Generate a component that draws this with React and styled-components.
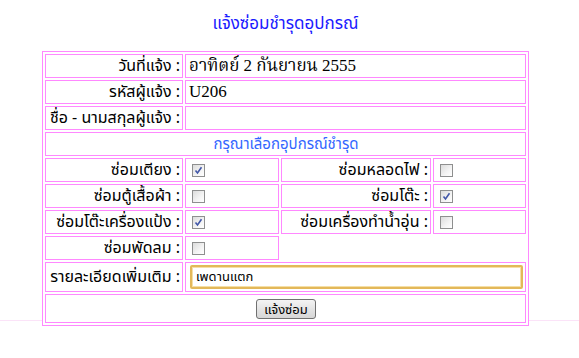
import { Fragment } from "react";
import styled, { createGlobalStyle } from "styled-components";

const pink = "#ff88ff";

const GlobalStyle = createGlobalStyle`
  body {
    margin: 0;
    background-color: #ffffff;
    background-image: linear-gradient(#fbe3f8, #fbe3f8);
    background-repeat: no-repeat;
    background-size: 100% 1px;
    background-position: 0 320px;
    font-family: Tahoma, "Noto Sans Thai", "Noto Serif Thai", Loma, Garuda, "DejaVu Sans", sans-serif;
  }
`;

const Page = styled.div`
  width: 579px;
  height: 358px;
  padding-left: 42px;
  box-sizing: border-box;
`;

const Title = styled.div`
  width: 487px;
  height: 51px;
  display: flex;
  align-items: center;
  justify-content: center;
  color: #1a1aff;
  font-size: 17px;
  padding-bottom: 3px;
  box-sizing: border-box;
`;

const Table = styled.div`
  display: grid;
  grid-template-columns: 138px 94px 150px 93px;
  grid-template-rows: repeat(8, 24px) 30px 29px;
  gap: 2px;
  padding: 2px;
  border: 1px solid ${pink};
  width: fit-content;
  background: #fff;
`;

const Cell = styled.div`
  border: ${(p) => (p.$empty ? "none" : `1px solid ${pink}`)};
  display: flex;
  align-items: center;
  justify-content: ${(p) =>
    p.$align === "right" ? "flex-end" : p.$align === "center" ? "center" : "flex-start"};
  grid-column: span ${(p) => p.$span || 1};
  padding: 0 2px 0 3px;
  font-size: 16px;
  color: #000;
  white-space: nowrap;
  overflow: hidden;
`;

const Value = styled.span`
  font-family: "Liberation Serif", Tahoma, "Noto Serif Thai", "Noto Sans Thai", serif;
  font-size: 17px;
`;

const Section = styled.span`
  color: #3366ff;
  font-size: 15px;
`;

const Box = styled.span`
  width: 13px;
  height: 13px;
  margin-left: 3px;
  box-sizing: border-box;
  border: 1px solid #8e8f8f;
  background: linear-gradient(135deg, #dcdcdc 0%, #f4f4f4 60%, #ffffff 100%);
  display: inline-flex;
  align-items: center;
  justify-content: center;
`;

function CheckBox({ checked }) {
  return (
    <Box>
      {checked && (
        <svg width="9" height="9" viewBox="0 0 9 9">
          <path d="M1.5 4.5 L3.5 7 L7.5 1.2" fill="none" stroke="#4257a8" strokeWidth="1.6" />
        </svg>
      )}
    </Box>
  );
}

const TextBox = styled.div`
  width: 334px;
  height: 24px;
  box-sizing: border-box;
  margin-left: 1px;
  border: 2px solid #e3b85a;
  border-radius: 2px;
  box-shadow: inset 0 0 0 1px #f5dfa6;
  display: flex;
  align-items: center;
  padding-left: 4px;
  font-size: 13px;
  color: #000;
`;

const Button = styled.button`
  width: 60px;
  height: 20px;
  border: 1px solid #707070;
  border-radius: 3px;
  background: linear-gradient(#f4f4f4, #e4e4e4 50%, #d6d6d6);
  font-family: inherit;
  font-size: 13px;
  padding: 0;
  color: #000;
`;

const items = [
  ["ซ่อมเตียง", true, "ซ่อมหลอดไฟ", false],
  ["ซ่อมตู้เสื้อผ้า", false, "ซ่อมโต๊ะ", true],
  ["ซ่อมโต๊ะเครื่องแป้ง", true, "ซ่อมเครื่องทำน้ำอุ่น", false],
];

export default function App() {
  return (
    <Page>
      <GlobalStyle />
      <Title>แจ้งซ่อมชำรุดอุปกรณ์</Title>
      <Table>
        <Cell $align="right">วันที่แจ้ง :</Cell>
        <Cell $span={3}>
          <Value>อาทิตย์ 2 กันยายน 2555</Value>
        </Cell>
        <Cell $align="right">รหัสผู้แจ้ง :</Cell>
        <Cell $span={3}>
          <Value>U206</Value>
        </Cell>
        <Cell $align="right">ชื่อ - นามสกุลผู้แจ้ง :</Cell>
        <Cell $span={3} />
        <Cell $span={4} $align="center">
          <Section>กรุณาเลือกอุปกรณ์ชำรุด</Section>
        </Cell>
        {items.map(([a, ca, b, cb]) => (
          <Fragment key={a}>
            <Cell $align="right">{a} :</Cell>
            <Cell>
              <CheckBox checked={ca} />
            </Cell>
            <Cell $align="right">{b} :</Cell>
            <Cell>
              <CheckBox checked={cb} />
            </Cell>
          </Fragment>
        ))}
        <Cell $align="right">ซ่อมพัดลม :</Cell>
        <Cell>
          <CheckBox />
        </Cell>
        <Cell $span={2} $empty />
        <Cell $align="right">รายละเอียดเพิ่มเติม :</Cell>
        <Cell $span={3}>
          <TextBox>เพดานแตก</TextBox>
        </Cell>
        <Cell $span={4} $align="center">
          <Button>แจ้งซ่อม</Button>
        </Cell>
      </Table>
    </Page>
  );
}
